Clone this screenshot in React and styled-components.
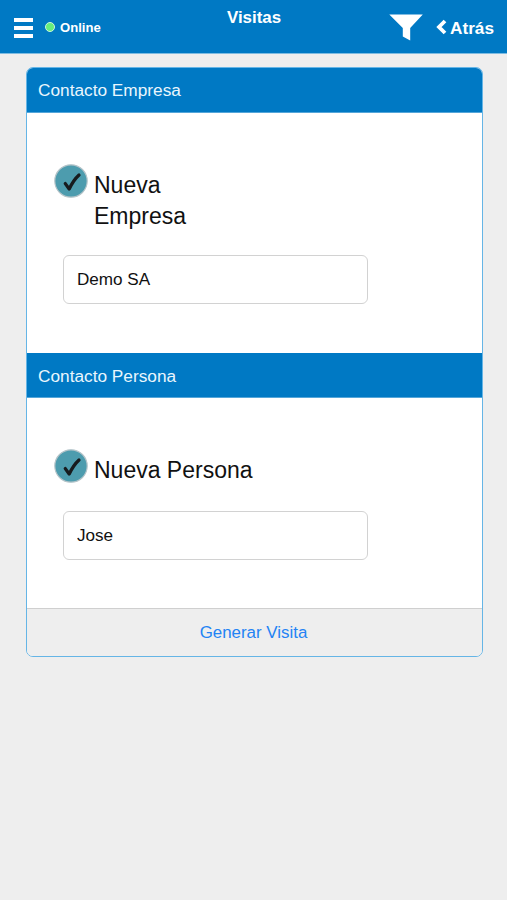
import React, { Component } from 'react'
import styled, { createGlobalStyle } from 'styled-components'

const GlobalStyle = createGlobalStyle`
    * {
        box-sizing: border-box;
    }

    body {
        margin: 0;
        background: #eeeeee;
        font-family: "Liberation Sans", Arial, sans-serif;
    }
`

const Page = styled.div`
    min-height: 900px;
    background: #eeeeee;
`

const TopBar = styled.header`
    display: grid;
    grid-template-columns: 1fr auto 1fr;
    height: 54px;
    padding: 0 13px 0 14px;
    background: #0079c4;
    border-bottom: 1px solid #7fbce1;
    color: #fff;
    font-weight: bold;
`

const BarSide = styled.div`
    display: flex;
    align-items: flex-start;
    justify-content: ${props => props.$end ? "flex-end" : "flex-start"};
`

const MenuButton = styled.div`
    display: flex;
    flex-direction: column;
    gap: 4px;
    margin-top: 18px;
`

const MenuLine = styled.span`
    width: 19px;
    height: 4px;
    background: #fff;
`

const StatusDot = styled.span`
    width: 10px;
    height: 10px;
    margin: 22px 5px 0 12px;
    border: 1px solid #c9f7dc;
    border-radius: 50%;
    background: #66ee7c;
`

const StatusText = styled.span`
    margin-top: 20px;
    font-size: 13.1px;
    line-height: 16px;
`

const Title = styled.h1`
    margin: 8px 0 0;
    font-size: 16.9px;
    line-height: 20px;
`

const FilterIcon = styled.svg`
    width: 34px;
    height: 28px;
    margin: 14px 13px 0 0;
    fill: #fff;
`

const BackIcon = styled.svg`
    width: 11px;
    height: 16px;
    margin: 19px 3px 0 0;
    fill: none;
    stroke: #fff;
    stroke-width: 3.8;
`

const BackText = styled.span`
    margin-top: 18px;
    font-size: 17.2px;
    line-height: 20px;
`

const Card = styled.main`
    width: 457px;
    height: 590px;
    margin: 13px 0 0 26px;
    overflow: hidden;
    border: 1px solid #65b5e6;
    border-radius: 7px;
    background: #fff;
`

const SectionHeading = styled.h2`
    height: 45px;
    margin: 0;
    padding: 0 11px;
    background: #0079c4;
    border-bottom: 1px solid #55a6d9;
    color: #e9f6fd;
    font-size: 17.25px;
    font-weight: normal;
    line-height: ${props => props.$first ? 45 : 47}px;
`

const SectionBody = styled.section`
    height: ${props => props.$height}px;
    padding: 51px 0 0 27px;
`

const CheckRow = styled.label`
    display: flex;
    width: ${props => props.$width}px;
`

const CheckIcon = styled.svg`
    flex: none;
    width: 34px;
    height: 34px;
    margin-right: 6px;
`

const CheckText = styled.span`
    margin-top: 6px;
    color: #111;
    font-size: 23px;
    line-height: 30.5px;
`

const TextInput = styled.input`
    display: block;
    width: 305px;
    height: 49px;
    margin: ${props => props.$gap}px 0 0 9px;
    padding: 1px 13px 0;
    border: 1px solid #d2d2d2;
    border-radius: 6px;
    outline: 0;
    background: #fff;
    color: #111;
    font-family: inherit;
    font-size: 17.1px;
`

const SubmitButton = styled.button`
    display: block;
    width: 100%;
    height: 48px;
    padding: 1px 2px 0 0;
    border: 0;
    border-top: 1px solid #cfcfcf;
    background: #eeeeee;
    color: #2383f4;
    font-family: inherit;
    font-size: 16.9px;
`

const Check = () => (
    <CheckIcon viewBox="0 0 34 34">
        <circle cx="17" cy="17" r="16.2" fill="#4d9cae" stroke="#b5c4c9" strokeWidth="1.2" />
        <path d="M11.3 19.6L15.2 25C17.8 19.6 20.5 15.1 25 11" fill="none" stroke="#171b1e" strokeWidth="3.3" strokeLinecap="round" strokeLinejoin="round" />
    </CheckIcon>
)

class ContactSection extends Component{
    render(){
        return(<>
            <SectionHeading $first={this.props.first}>{this.props.heading}</SectionHeading>
            <SectionBody $height={this.props.height}>
                <CheckRow $width={this.props.label_width}>
                    <Check />
                    <CheckText>{this.props.label}</CheckText>
                </CheckRow>
                <TextInput $gap={this.props.gap} defaultValue={this.props.value} />
            </SectionBody>
        </>)
    }
}

export default class App extends Component{
    render(){
        return(<Page>
            <GlobalStyle />
            <TopBar>
                <BarSide>
                    <MenuButton>
                        <MenuLine />
                        <MenuLine />
                        <MenuLine />
                    </MenuButton>
                    <StatusDot />
                    <StatusText>Online</StatusText>
                </BarSide>
                <Title>Visitas</Title>
                <BarSide $end>
                    <FilterIcon viewBox="0 0 34 28">
                        <path d="M0.3 0.6H33.8L21.2 14V26.6L13.8 22.6V14Z" />
                    </FilterIcon>
                    <BackIcon viewBox="0 0 11 16">
                        <path d="M9 2L3 8L9 14" />
                    </BackIcon>
                    <BackText>Atrás</BackText>
                </BarSide>
            </TopBar>

            <Card>
                <ContactSection first heading="Contacto Empresa" label="Nueva Empresa" label_width={150} value="Demo SA" height={240} gap={24} />
                <ContactSection heading="Contacto Persona" label="Nueva Persona" label_width={240} value="Jose" height={210} gap={25} />
                <SubmitButton>Generar Visita</SubmitButton>
            </Card>
        </Page>)
    }
}
